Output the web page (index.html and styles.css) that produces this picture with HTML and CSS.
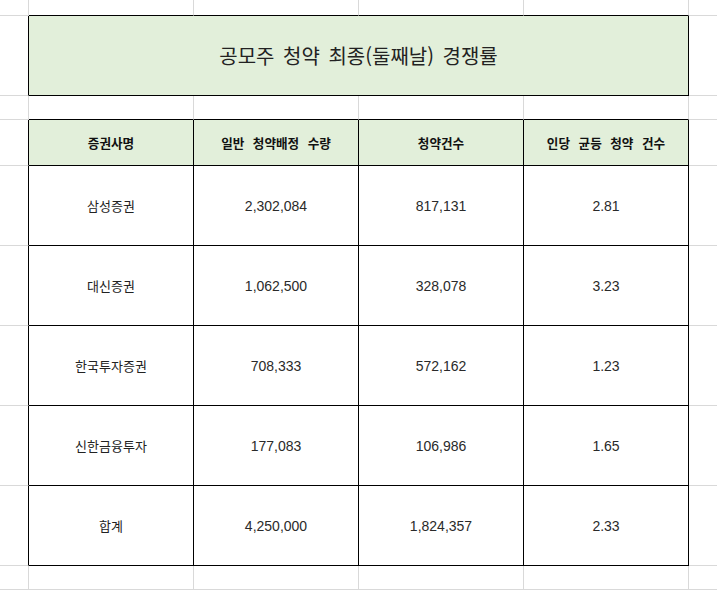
FILE: index.html
```html
<!DOCTYPE html>
<html lang="ko">
<head>
<meta charset="utf-8">
<title>공모주 청약 최종(둘째날) 경쟁률</title>
<link rel="stylesheet" href="styles.css">
</head>
<body>
<div class="sheet">
  <!-- row 1 -->
  <div class="c"></div><div class="c bb"></div><div class="c bb"></div><div class="c bb"></div><div class="c bb"></div><div class="c last"></div>
  <!-- row 2: title -->
  <div class="c br"></div>
  <div class="c t fill title">공모주 청약 최종(둘째날) 경쟁률</div>
  <div class="c last"></div>
  <!-- row 3 -->
  <div class="c"></div><div class="c bb"></div><div class="c bb"></div><div class="c bb"></div><div class="c bb"></div><div class="c last"></div>
  <!-- row 4: header -->
  <div class="c br"></div>
  <div class="c t fill head">증권사명</div>
  <div class="c t fill head">일반 청약배정 수량</div>
  <div class="c t fill head">청약건수</div>
  <div class="c t fill head">인당 균등 청약 건수</div>
  <div class="c last"></div>
  <!-- data rows -->
  <div class="c br"></div>
  <div class="c t kr">삼성증권</div><div class="c t num">2,302,084</div><div class="c t num">817,131</div><div class="c t num">2.81</div>
  <div class="c last"></div>
  <div class="c br"></div>
  <div class="c t kr">대신증권</div><div class="c t num">1,062,500</div><div class="c t num">328,078</div><div class="c t num">3.23</div>
  <div class="c last"></div>
  <div class="c br"></div>
  <div class="c t kr">한국투자증권</div><div class="c t num">708,333</div><div class="c t num">572,162</div><div class="c t num">1.23</div>
  <div class="c last"></div>
  <div class="c br"></div>
  <div class="c t kr">신한금융투자</div><div class="c t num">177,083</div><div class="c t num">106,986</div><div class="c t num">1.65</div>
  <div class="c last"></div>
  <div class="c br"></div>
  <div class="c t kr">합계</div><div class="c t num">4,250,000</div><div class="c t num">1,824,357</div><div class="c t num">2.33</div>
  <div class="c last"></div>
  <!-- row 10 -->
  <div class="c"></div><div class="c"></div><div class="c"></div><div class="c"></div><div class="c"></div><div class="c last"></div>
</div>
</body>
</html>
```
FILE: styles.css
```css
* { box-sizing: border-box; }
html, body { margin: 0; padding: 0; background: #fff; }
body {
  font-family: "Liberation Sans", "Noto Sans CJK KR", sans-serif;
  color: #1a1a1a;
  overflow: hidden;
}
.sheet {
  display: grid;
  width: 717px;
  height: 590px;
  grid-template-columns: 29px 165px 165px 165px 165px 1fr;
  grid-template-rows: 16px 80px 24px 46px repeat(5, 80px) 1fr;
}
.c {
  border-right: 1px solid #d9d9d9;
  border-bottom: 1px solid #d9d9d9;
}
.c.last { border-right: none; }
.c.br { border-right-color: #000; }
.c.bb { border-bottom-color: #000; }
.c.t {
  border-right-color: #000;
  border-bottom-color: #000;
  display: flex;
  align-items: center;
  justify-content: center;
  white-space: nowrap;
}
.fill { background: #e2efda; }
.title {
  grid-column: span 4;
  font-family: "Noto Sans CJK KR", sans-serif;
  font-size: 20px;
  word-spacing: 3px;
  color: #222;
}
.head {
  font-family: "Noto Sans CJK KR", sans-serif;
  font-size: 12.6px;
  font-weight: 700;
  word-spacing: 5px;
  color: #111;
}
.kr {
  font-family: "Noto Sans CJK KR", sans-serif;
  font-size: 13px;
  color: #222;
}
.num {
  font-size: 14px;
  color: #2a2a2a;
}
```
